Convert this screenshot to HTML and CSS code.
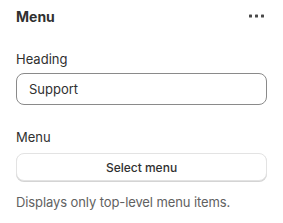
FILE: index.html
```html
<!DOCTYPE html>
<html lang="en">
<head>
    <meta charset="UTF-8">
    <title>Menu</title>
    <link rel="stylesheet" href="styles.css">
</head>
<body>
    <div class="panel">
        <div class="panel-head">
            <div class="panel-title">Menu</div>
            <button class="more" aria-label="More">
                <svg width="16" height="4" viewBox="0 0 16 4">
                    <rect x="0" y="0.5" width="3" height="3" rx="0.6" fill="#4a4a4a"/>
                    <rect x="6" y="0.5" width="3" height="3" rx="0.6" fill="#4a4a4a"/>
                    <rect x="12" y="0.5" width="3" height="3" rx="0.6" fill="#4a4a4a"/>
                </svg>
            </button>
        </div>

        <div class="field">
            <label class="label" for="heading">Heading</label>
            <input class="input" id="heading" type="text" value="Support">
        </div>

        <div class="field">
            <div class="label label-menu">Menu</div>
            <button class="select-btn">Select menu</button>
            <div class="help">Displays only top-level menu items.</div>
        </div>
    </div>
</body>
</html>
```

FILE: styles.css
```css
body {
    margin: 0;
    background: #ffffff;
    font-family: Inter, "Noto Sans", sans-serif;
    color: #303030;
    font-size: 13px;
}
.panel {
    padding: 7px 16px 0 16px;
    width: 251px;
}
.panel-head {
    display: flex;
    align-items: center;
    justify-content: space-between;
    height: 18px;
    margin-bottom: 24px;
}
.panel-title {
    font-weight: 650;
    font-size: 14px;
}
.more {
    border: none;
    background: none;
    padding: 0;
    margin-right: 2px;
    display: flex;
}
.field {
    display: flex;
    flex-direction: column;
    margin-bottom: 22px;
}
.label {
    line-height: 20px;
    margin-bottom: 4px;
}
.label-menu {
    margin-bottom: 6px;
}
.input {
    font: inherit;
    color: #303030;
    height: 32px;
    box-sizing: border-box;
    border: 1px solid #8a8a8a;
    border-radius: 8px;
    padding: 0 12px;
    outline: none;
}
.select-btn {
    font: inherit;
    font-size: 12px;
    font-weight: 500;
    color: #303030;
    height: 28px;
    box-sizing: border-box;
    border: 1px solid #e3e3e3;
    border-radius: 8px;
    background: #ffffff;
    box-shadow: 0 1px 0 #d4d4d4;
}
.help {
    color: #616161;
    margin-top: 11px;
    line-height: 20px;
    letter-spacing: -0.1px;
}
```
